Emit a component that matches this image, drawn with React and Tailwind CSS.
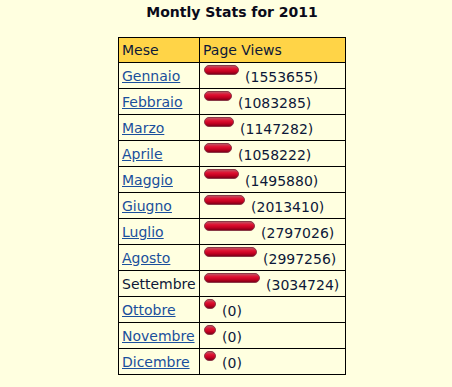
import React from "react";

const rows = [
  { m: "Gennaio", w: 35, v: "1553655", link: true },
  { m: "Febbraio", w: 28, v: "1083285", link: true },
  { m: "Marzo", w: 30, v: "1147282", link: true },
  { m: "Aprile", w: 28, v: "1058222", link: true },
  { m: "Maggio", w: 35, v: "1495880", link: true },
  { m: "Giugno", w: 41, v: "2013410", link: true },
  { m: "Luglio", w: 51, v: "2797026", link: true },
  { m: "Agosto", w: 53, v: "2997256", link: true },
  { m: "Settembre", w: 56, v: "3034724", link: false },
  { m: "Ottobre", w: 0, v: "0", link: true },
  { m: "Novembre", w: 0, v: "0", link: true },
  { m: "Dicembre", w: 0, v: "0", link: true },
];

function Bar({ w }) {
  if (w === 0) {
    return (
      <span className="block h-[10px] w-[12px] shrink-0 rounded-full border border-[#8a3a48] bg-[linear-gradient(to_bottom,#c05060_0%,#e01030_35%,#c00020_70%,#800018_100%)]" />
    );
  }
  return (
    <span
      className="block h-[10px] shrink-0 rounded-full border border-[#8a3a48] bg-[linear-gradient(to_bottom,#c05060_0%,#e01030_35%,#c00020_70%,#800018_100%)]"
      style={{ width: w + "px" }}
    />
  );
}

export default function App() {
  return (
    <div className="min-h-[387px] w-[452px] bg-[#FFFFE0] pl-[12px] text-[#0d1838] [font-family:'DejaVu_Sans',Verdana,sans-serif]">
      <div className="flex flex-col items-center">
        <h1 className="mt-[4px] text-[14px] font-bold leading-[16px] text-[#0a0a1a]">
          Montly Stats for 2011
        </h1>
        <table className="mt-[17px] w-[228px] border-collapse border border-black text-[14px] leading-[16px]">
          <thead>
            <tr className="bg-[#FFD447]">
              <th className="h-[25px] w-[81px] border border-black px-[3px] text-left font-normal">
                Mese
              </th>
              <th className="h-[25px] border border-black px-[3px] text-left font-normal">
                Page Views
              </th>
            </tr>
          </thead>
          <tbody>
            {rows.map((r) => (
              <tr key={r.m}>
                <td className="h-[26px] border border-black px-[3px] align-middle">
                  {r.link ? (
                    <a href="#" className="text-[#1a4f9c] underline">
                      {r.m}
                    </a>
                  ) : (
                    r.m
                  )}
                </td>
                <td className="h-[26px] border border-black px-[3px] pt-[2px] align-top">
                  <div className="flex items-start gap-[6px] pl-[1px]">
                    <Bar w={r.w} />
                    <span className="mt-[4px]">({r.v})</span>
                  </div>
                </td>
              </tr>
            ))}
          </tbody>
        </table>
      </div>
    </div>
  );
}
